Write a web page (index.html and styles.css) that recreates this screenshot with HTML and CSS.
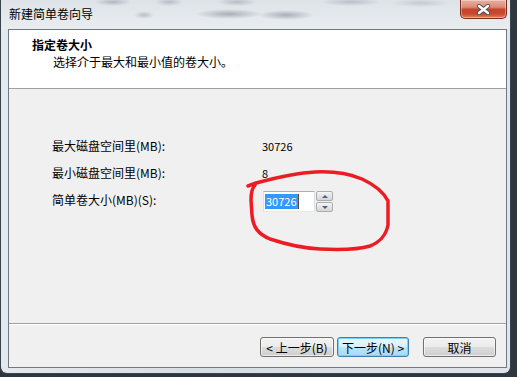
FILE: index.html
```html
<!DOCTYPE html>
<html lang="zh-CN">
<head>
<meta charset="utf-8">
<title>新建简单卷向导</title>
<link rel="stylesheet" href="styles.css">
</head>
<body>

<div class="window">
  <div class="titlebar">
    <span class="title">新建简单卷向导</span>
    <button class="close-btn">
      <svg width="15" height="11" viewBox="0 0 15 11">
        <path d="M3,2 L12,9 M12,2 L3,9" stroke="#4a4f58" stroke-width="4.2" stroke-linecap="round"/>
        <path d="M3,2 L12,9 M12,2 L3,9" stroke="#fff" stroke-width="2.4" stroke-linecap="round"/>
      </svg>
    </button>
  </div>

  <div class="frame">
    <div class="client">
      <div class="header">
        <div class="heading">指定卷大小</div>
        <div class="subheading">选择介于最大和最小值的卷大小。</div>
      </div>

      <div class="content">
        <div class="fields">
          <span class="label">最大磁盘空间里(MB):</span>
          <span class="value">30726</span>

          <span class="label">最小磁盘空间里(MB):</span>
          <span class="value">8</span>

          <span class="label">简单卷大小(MB)(S):</span>
          <div class="spinner">
            <div class="spin-input"><span class="selected">30726</span><span class="caret"></span></div>
            <div class="spin-btns">
              <span class="spin-btn up"></span>
              <span class="spin-btn down"></span>
            </div>
          </div>
        </div>
      </div>

      <div class="buttons">
        <button class="btn back">&lt; 上一步(B)</button>
        <button class="btn next default">下一步(N) &gt;</button>
        <button class="btn cancel">取消</button>
      </div>
    </div>
  </div>
</div>

<!-- 红色手绘圈 -->
<svg class="annotation" width="517" height="377" viewBox="0 0 517 377">
  <path d="M248,186 L256,183 C275,178 295,173 315,172 C335,171 350,174 362,179 C375,185 384,193 388,201 L388,225 C386,236 378,243 370,246 C360,249 340,250 320,249 C300,248 285,244 270,239 C258,234 253,227 252,215 L251,200 C251,192 252,188 255,185"
        fill="none" stroke="#ed1c24" stroke-width="3.5" stroke-linecap="round" stroke-linejoin="round"/>
</svg>

</body>
</html>
```

FILE: styles.css
```css
*{box-sizing:border-box;}
body{margin:0;width:517px;height:377px;overflow:hidden;position:relative;background:#2f363e;font-family:"Noto Sans CJK SC","Noto Sans",sans-serif;font-size:12px;color:#000;}

.window{width:511px;height:374px;display:flex;flex-direction:column;border:1px solid #39434d;border-top:none;border-radius:0 0 7px 7px;background:linear-gradient(90deg,#e4e9ed,#d7dee4 40%,#dfe5ea);overflow:hidden;}

/* 标题栏 */
.titlebar{height:29px;display:flex;align-items:flex-start;
  background:
    radial-gradient(ellipse 18px 4px at 112px 2px,rgba(90,100,112,.35),transparent),
    radial-gradient(ellipse 10px 4px at 143px 15px,rgba(90,100,112,.3),transparent),
    radial-gradient(ellipse 14px 4px at 168px 2px,rgba(90,100,112,.3),transparent),
    radial-gradient(ellipse 34px 5px at 228px 14px,rgba(80,90,102,.4),transparent),
    radial-gradient(ellipse 20px 4px at 236px 2px,rgba(90,100,112,.3),transparent),
    radial-gradient(ellipse 28px 5px at 285px 15px,rgba(80,90,102,.4),transparent),
    radial-gradient(ellipse 30px 4px at 350px 2px,rgba(90,100,112,.28),transparent),
    radial-gradient(ellipse 30px 4px at 420px 3px,rgba(90,100,112,.2),transparent),
    linear-gradient(#dde3e8,#e9edf0);}
.title{padding:6px 0 0 8px;line-height:16px;}
.close-btn{margin:0 3px 0 auto;width:47px;height:19px;padding:0;display:flex;align-items:center;justify-content:center;border:1px solid #7a2e20;border-top:none;border-radius:0 0 5px 5px;background:linear-gradient(#eab0a2 0%,#dc8a77 40%,#c4432b 52%,#c84a30 78%,#e3825e 100%);box-shadow:inset 0 0 0 1px rgba(255,255,255,.35);}

/* 窗口框 */
.frame{flex:1;padding:0 3px 5px 7px;display:flex;}
.client{flex:1;display:flex;flex-direction:column;border:1px solid #6f7a84;background:#f0f0f0;}

.header{height:59px;background:#fff;border-bottom:1px solid #a0a0a0;padding:6px 0 0 23px;}
.heading{font-weight:bold;line-height:17px;}
.subheading{line-height:17px;padding-left:21px;}

.content{flex:1;border-bottom:1px solid #a0a0a0;box-shadow:0 1px 0 #fff;padding:47px 0 0 43px;}
.fields{display:grid;grid-template-columns:210px auto;grid-template-rows:20px 20px 22px;row-gap:7px;}
.label,.value{line-height:20px;}
.value{font-size:11px;}

/* 微调框 */
.spinner{display:flex;align-self:end;height:21px;}
.spin-input{width:52px;margin-left:1px;display:flex;align-items:center;padding-left:1px;background:#fff;border:1px solid #dbdfe6;border-top-color:#abadb3;border-bottom-color:#e3e9ef;}
.selected{background:#3399ff;color:#fff;font-size:11px;line-height:15px;padding:0 1px;}
.caret{width:1px;height:15px;background:#6b4a2a;}
.spin-btns{margin-left:1px;width:17px;display:flex;flex-direction:column;gap:1px;}
.spin-btn{flex:1;border:1px solid #acacac;border-radius:2px;background:linear-gradient(#f6f6f6,#e4e4e4 50%,#d6d6d6);display:flex;align-items:center;justify-content:center;}
.spin-btn::after{content:"";border-left:3px solid transparent;border-right:3px solid transparent;}
.spin-btn.up::after{border-bottom:3px solid #4d6185;}
.spin-btn.down::after{border-top:3px solid #4d6185;}

/* 按钮 */
.buttons{height:43px;display:flex;justify-content:flex-end;align-items:flex-start;padding:13px 10px 0 0;}
.btn{height:20px;padding:0;font:12px "Noto Sans CJK SC","Noto Sans",sans-serif;line-height:17px;color:#000;border:1px solid #707070;border-radius:3px;background:linear-gradient(#f2f2f2 0%,#ebebeb 50%,#dddddd 50%,#cfcfcf 100%);box-shadow:inset 0 0 0 1px rgba(255,255,255,.6);}
.back{width:74px;}
.next{width:72px;margin-left:3px;}
.cancel{width:73px;margin-left:14px;}
.btn.default{border-color:#3c7fb1;background:linear-gradient(#eaf6fd 0%,#d9f0fc 50%,#bee6fd 50%,#a7d9f5 100%);box-shadow:inset 0 0 0 1px #7fd0f7;}

.annotation{position:absolute;left:0;top:0;pointer-events:none;}
```
